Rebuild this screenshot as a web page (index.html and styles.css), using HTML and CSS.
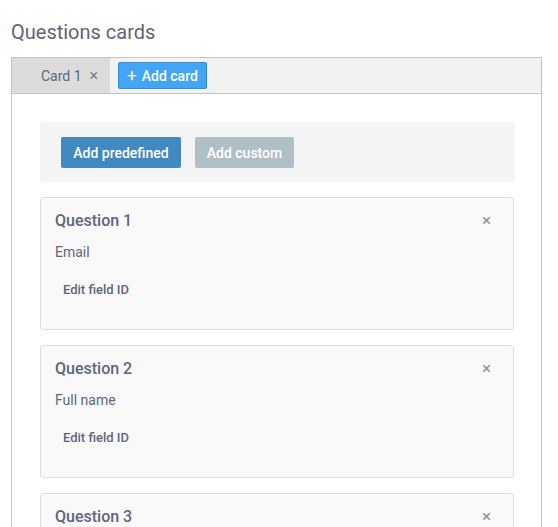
FILE: index.html
```html
<!DOCTYPE html>
<html>
<head>
<meta charset="utf-8">
<link rel="stylesheet" href="styles.css">
</head>
<body>
<div class="page">
  <h1 class="title">Questions cards</h1>
  <div class="tabs">
    <div class="tabbar">
      <div class="tab active"><span>Card 1</span><span class="tab-x">×</span></div>
      <button class="add-card"><span class="plus">+</span> Add card</button>
    </div>
    <div class="content">
      <div class="actions">
        <button class="btn primary">Add predefined</button>
        <button class="btn muted">Add custom</button>
      </div>
      <div class="card">
        <div class="card-head"><span class="card-title">Question 1</span><span class="close">×</span></div>
        <div class="field">Email</div>
        <div class="edit">Edit field ID</div>
      </div>
      <div class="card">
        <div class="card-head"><span class="card-title">Question 2</span><span class="close">×</span></div>
        <div class="field">Full name</div>
        <div class="edit">Edit field ID</div>
      </div>
      <div class="card">
        <div class="card-head"><span class="card-title">Question 3</span><span class="close">×</span></div>
        <div class="field">Phone</div>
        <div class="edit">Edit field ID</div>
      </div>
    </div>
  </div>
</div>
</body>
</html>
```
FILE: styles.css
```css
html, body { margin: 0; padding: 0; background: #fff; overflow: hidden; }
body { font-family: Roboto, "Liberation Sans", sans-serif; color: #5e6680; }
.page { padding: 20px 16px 0 11px; }
.title { margin: 0 0 13px 0; font-size: 20px; font-weight: 400; line-height: 24px; color: #5f6478; }
.tabs { border: 1px solid #c4c4c4; width: 529px; }
.tabbar { display: flex; align-items: center; background: #f2f2f2; border-bottom: 1px solid #c4c4c4; height: 35px; }
.tab { display: flex; align-items: center; height: 35px; box-sizing: border-box; padding: 0 10px 0 29px; width: 98px; font-size: 14px; color: #5e6680; }
.tab.active { background: #dcdcdc; }
.tab-x { margin-left: 8px; font-size: 16px; color: #7a7f8e; }
.add-card { margin-left: 8px; height: 27px; width: 89px; box-sizing: border-box; border: 1px solid #2e8fde; border-radius: 2px; background: #42a5f5; color: #fff; font-family: inherit; font-size: 14px; font-weight: 500; padding: 0; display: flex; align-items: center; justify-content: center; white-space: nowrap; }
.plus { font-size: 17px; font-weight: 400; margin-right: 5px; line-height: 1; }
.content { padding: 28px 27px 0 28px; display: flex; flex-direction: column; gap: 15px; }
.actions { background: #f4f4f4; border-radius: 2px; padding: 15px 21px 14px; display: flex; gap: 14px; }
.btn { height: 31px; border: none; border-radius: 2px; color: #fff; font-family: inherit; font-size: 14px; font-weight: 500; padding: 0; white-space: nowrap; }
.btn.primary { background: #4189c0; width: 120px; }
.btn.muted { background: #b0bec5; width: 99px; }
.card { background: #f9f9f9; border: 1px solid #dedede; border-radius: 3px; height: 133px; box-sizing: border-box; padding: 11px 22px 0 14px; }
.card-head { display: flex; justify-content: space-between; align-items: center; height: 22px; }
.card-title { font-size: 16px; font-weight: 500; color: #5e6680; }
.close { font-size: 17px; color: #8a8f9c; }
.field { margin-top: 11px; font-size: 14px; line-height: 20px; color: #5e6680; }
.edit { margin: 20px 0 0 8px; font-size: 13px; line-height: 16px; font-weight: 500; color: #5e6680; }
```
